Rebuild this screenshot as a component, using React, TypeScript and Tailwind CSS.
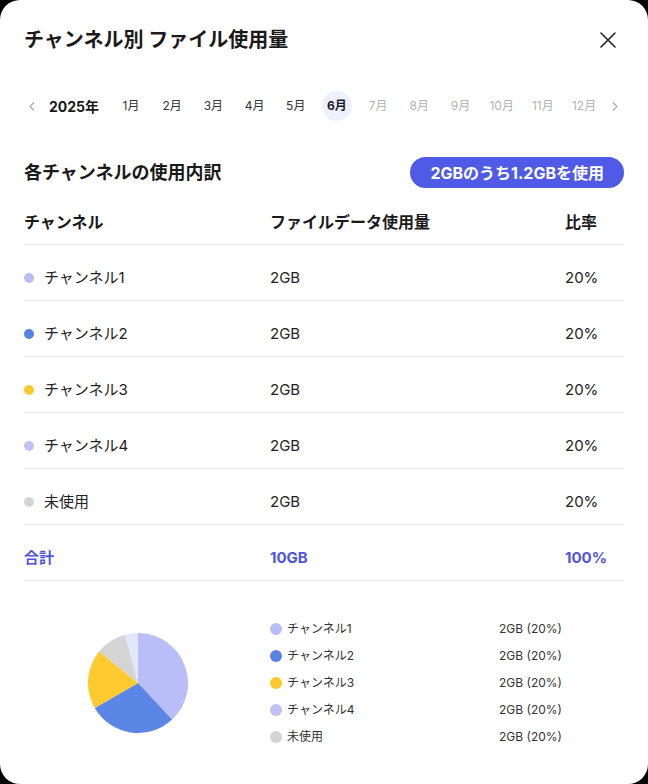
import React from 'react'

const FONT = { fontFamily: 'Inter, "Noto Sans CJK JP", sans-serif' }

interface Row {
  name: string
  color: string
  size: string
  rate: string
}

const rows: Row[] = [
  { name: 'チャンネル1', color: 'bg-[#babdf5]', size: '2GB', rate: '20%' },
  { name: 'チャンネル2', color: 'bg-[#5882e3]', size: '2GB', rate: '20%' },
  { name: 'チャンネル3', color: 'bg-[#fdc82d]', size: '2GB', rate: '20%' },
  { name: 'チャンネル4', color: 'bg-[#c0c2f6]', size: '2GB', rate: '20%' },
  { name: '未使用', color: 'bg-[#d4d4d6]', size: '2GB', rate: '20%' },
]

const months = ['1月', '2月', '3月', '4月', '5月', '6月', '7月', '8月', '9月', '10月', '11月', '12月']

const slices = [
  { from: 0, to: 137, color: '#b9bdf8' },
  { from: 137, to: 240, color: '#5b86e5' },
  { from: 240, to: 309, color: '#fdca2f' },
  { from: 309, to: 345, color: '#d4d4d4' },
  { from: 345, to: 360, color: '#e3e6fc' },
]

function arc(from: number, to: number, r: number) {
  const p = (a: number) => {
    const rad = ((a - 90) * Math.PI) / 180
    return `${50 + r * Math.cos(rad)} ${50 + r * Math.sin(rad)}`
  }
  const large = to - from > 180 ? 1 : 0
  return `M50 50 L${p(from)} A${r} ${r} 0 ${large} 1 ${p(to)} Z`
}

function Pie() {
  return (
    <svg width="100" height="100" viewBox="0 0 100 100">
      {slices.map((s) => (
        <path key={s.from} d={arc(s.from, s.to, 50)} fill={s.color} />
      ))}
    </svg>
  )
}

export default function App() {
  return (
    <div className="w-[648px] h-[784px] bg-black" style={FONT}>
      <div className="w-[648px] h-[784px] bg-white rounded-[20px] px-6 pt-[26px] text-[#222]">
        {/* header */}
        <div className="flex items-center justify-between h-7">
          <h1 className="text-[20px] leading-7 font-bold text-[#1a1a1a]">チャンネル別 ファイル使用量</h1>
          <button className="mr-[8px] text-[#222]">
            <svg width="16" height="16" viewBox="0 0 16 16" fill="none" stroke="currentColor" strokeWidth="1.6" strokeLinecap="round">
              <path d="M1 1 L15 15 M15 1 L1 15" />
            </svg>
          </button>
        </div>

        {/* month selector */}
        <div className="flex items-center h-[30px] mt-[37px]">
          <div className="w-4 flex justify-center text-[#aaa]">
            <svg width="6" height="9" viewBox="0 0 6 9" fill="none" stroke="currentColor" strokeWidth="1.2">
              <path d="M5 0.5 L1 4.5 L5 8.5" />
            </svg>
          </div>
          <span className="ml-[9px] text-[14px] font-bold text-[#1a1a1a] w-[51px] whitespace-nowrap">2025年</span>
          <div className="ml-4 flex gap-[11.2px]">
            {months.map((m, i) => (
              <div
                key={m}
                className={
                  'w-[30px] h-[30px] rounded-full flex items-center justify-center text-[12px] whitespace-nowrap ' +
                  (i === 5
                    ? 'bg-[#eef0fb] font-bold text-[#1a1a2e]'
                    : i < 5
                      ? 'text-[#333]'
                      : 'text-[#b3b3b3]')
                }
              >
                {m}
              </div>
            ))}
          </div>
          <div className="ml-[8px] w-4 flex justify-center text-[#aaa]">
            <svg width="6" height="9" viewBox="0 0 6 9" fill="none" stroke="currentColor" strokeWidth="1.2">
              <path d="M1 0.5 L5 4.5 L1 8.5" />
            </svg>
          </div>
        </div>

        {/* section heading */}
        <div className="flex items-center justify-between mt-[36px] h-[31px]">
          <h2 className="text-[18px] font-semibold text-[#1a1a1a]">各チャンネルの使用内訳</h2>
          <span className="h-[31px] px-[20px] rounded-full bg-[#4f5ae6] text-white text-[16px] font-bold flex items-center">
            2GBのうち1.2GBを使用
          </span>
        </div>

        {/* table */}
        <div className="mt-[23px]">
          <div className="grid grid-cols-[246px_295px_1fr] pb-[11px] border-b border-[#e9e9ec] text-[16px] leading-[22px] font-bold text-[#1a1a1a]">
            <div>チャンネル</div>
            <div>ファイルデータ使用量</div>
            <div>比率</div>
          </div>
          {rows.map((r) => (
            <div
              key={r.name}
              className="grid grid-cols-[246px_295px_1fr] pt-[22px] pb-[11px] border-b border-[#e9e9ec] text-[15px] leading-[22px] text-[#222]"
            >
              <div className="flex items-center gap-[10px]">
                <span className={'w-[10px] h-[10px] rounded-full ' + r.color} />
                {r.name}
              </div>
              <div>{r.size}</div>
              <div>{r.rate}</div>
            </div>
          ))}
          <div className="grid grid-cols-[246px_295px_1fr] pt-[22px] pb-[11px] border-b border-[#e9e9ec] text-[15px] leading-[22px] font-bold text-[#5054e2]">
            <div>合計</div>
            <div>10GB</div>
            <div>100%</div>
          </div>
        </div>

        {/* chart */}
        <div className="grid grid-cols-[246px_1fr]">
          <div className="pl-[64px] pt-[52px]">
            <Pie />
          </div>
          <div className="pt-[38px] flex flex-col gap-[7px]">
            {rows.map((r) => (
              <div key={r.name} className="flex items-center h-[20px] text-[12px] text-[#333]">
                <span className={'w-[12px] h-[12px] rounded-full ' + r.color} />
                <span className="ml-[5px] w-[212px]">{r.name}</span>
                <span>
                  {r.size} ({r.rate})
                </span>
              </div>
            ))}
          </div>
        </div>
      </div>
    </div>
  )
}
